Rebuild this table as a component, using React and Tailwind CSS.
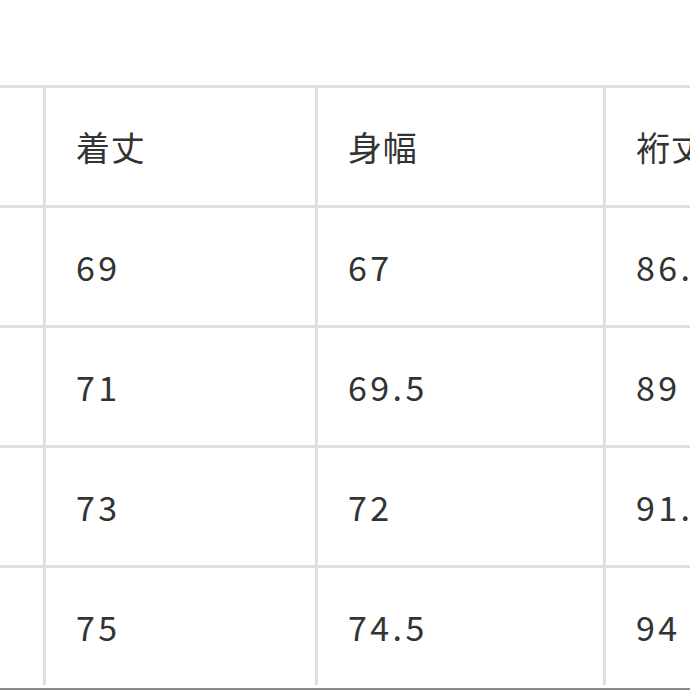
const rows = [
  ["", "着丈", "身幅", "裄丈"],
  ["", "69", "67", "86.5"],
  ["", "71", "69.5", "89"],
  ["", "73", "72", "91.5"],
  ["", "75", "74.5", "94"],
];

export default function App() {
  return (
    <div
      className="w-[690px] h-[690px] overflow-hidden bg-white box-border border-b-2 border-[#8a8a8a] pt-[85px]"
      style={{ fontFamily: '"Noto Sans CJK JP", "Noto Sans", sans-serif' }}
    >
      <div className="grid grid-cols-[43px_269px_285px_120px] gap-[3px] bg-[#e0e0e0] border-t-[3px] border-[#e0e0e0] w-[726px]">
        {rows.map((row, i) =>
          row.map((cell, j) => (
            <div
              key={`${i}-${j}`}
              className="h-[117px] bg-white flex items-center pl-[30px] text-[34px] text-[#333] whitespace-nowrap overflow-hidden"
            >
              <span className={i === 0 ? "tracking-[0.02em]" : "tracking-[0.1em]"}>{cell}</span>
            </div>
          ))
        )}
      </div>
    </div>
  );
}
